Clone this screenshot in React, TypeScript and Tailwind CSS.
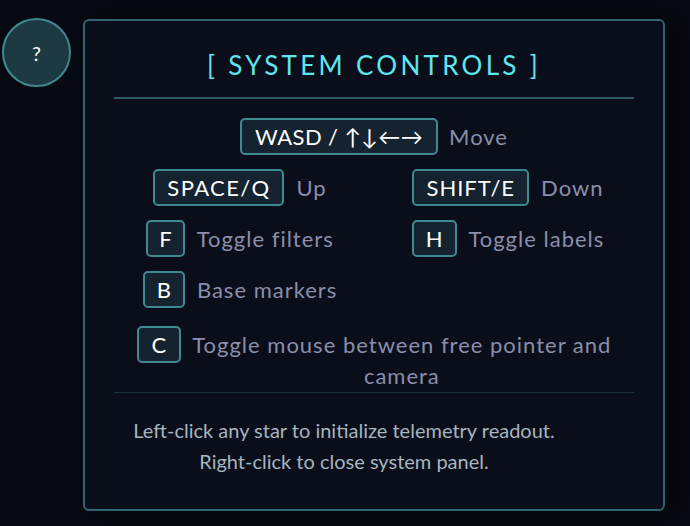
import React from "react";

const Key = ({ children, className = "" }: { children: React.ReactNode; className?: string }) => (
  <span
    className={
      "inline-flex h-[37px] items-center justify-center rounded-[5px] border-2 border-[#3e8a91] bg-[#14232f] px-[11px] text-[22px] leading-none text-white " +
      className
    }
  >
    {children}
  </span>
);

const Desc = ({ children }: { children: React.ReactNode }) => (
  <span className="text-[22px] leading-none tracking-[1px] text-[#8a8eaa]">{children}</span>
);

export default function App() {
  return (
    <div
      className="relative h-[526px] w-[690px] overflow-hidden bg-[#070a13]"
      style={{ fontFamily: "Lato, 'Noto Sans', sans-serif" }}
    >
      <div className="flex items-start">
        <div className="ml-[2px] mt-[18px] flex h-[69px] w-[69px] shrink-0 items-center justify-center rounded-full border-2 border-[#3f8a8e] bg-[#1d3a43] text-[20px] text-white">
          ?
        </div>
        <div className="ml-[12px] mt-[19px] flex h-[492px] w-[582px] flex-col rounded-[6px] border-2 border-[#2f6570] bg-[#0a0e1b] px-[29px] pt-[27px] shadow-[12px_0_30px_rgba(0,0,0,0.5)]">
          <h1 className="text-center text-[26px] leading-[34px] tracking-[3.3px] text-[#5fe6ee]">
            [ SYSTEM CONTROLS ]
          </h1>
          <div className="mt-[15px] h-[2px] bg-[#2d5963]" />
          <div className="mt-[19px] grid grid-cols-2 gap-x-[16px] gap-y-[14px]">
            <div className="col-span-2 flex items-center justify-center gap-[11px]">
              <Key className="px-[13px] tracking-[0.4px]">WASD / ↑↓←→</Key>
              <Desc>Move</Desc>
            </div>
            <div className="flex items-center justify-center gap-[12px]">
              <Key className="px-[12px] tracking-[1.4px]">SPACE/Q</Key>
              <Desc>Up</Desc>
            </div>
            <div className="flex items-center justify-center gap-[12px]">
              <Key className="px-[12px] tracking-[1px]">SHIFT/E</Key>
              <Desc>Down</Desc>
            </div>
            <div className="flex items-center justify-center gap-[12px]">
              <Key className="px-[11px]">F</Key>
              <Desc>Toggle filters</Desc>
            </div>
            <div className="flex items-center justify-center gap-[12px]">
              <Key className="px-[12px]">H</Key>
              <Desc>Toggle labels</Desc>
            </div>
            <div className="flex items-center justify-center gap-[12px]">
              <Key className="px-[12px]">B</Key>
              <Desc>Base markers</Desc>
            </div>
            <div />
            <div className="col-span-2 mt-[4px] flex items-start justify-center gap-[11px]">
              <Key className="px-[13px]">C</Key>
              <span className="pt-[3px] text-center text-[22px] leading-[31px] tracking-[1px] text-[#8a8eaa]">
                Toggle mouse between free pointer and
                <br />
                camera
              </span>
            </div>
          </div>
          <div className="mt-[1px] h-[1px] bg-[#1b3037]" />
          <div className="mt-[22px] pr-[60px] text-center text-[20px] leading-[31px] text-[#a7b5bf]">
            Left-click any star to initialize telemetry readout.
            <br />
            Right-click to close system panel.
          </div>
        </div>
      </div>
    </div>
  );
}
